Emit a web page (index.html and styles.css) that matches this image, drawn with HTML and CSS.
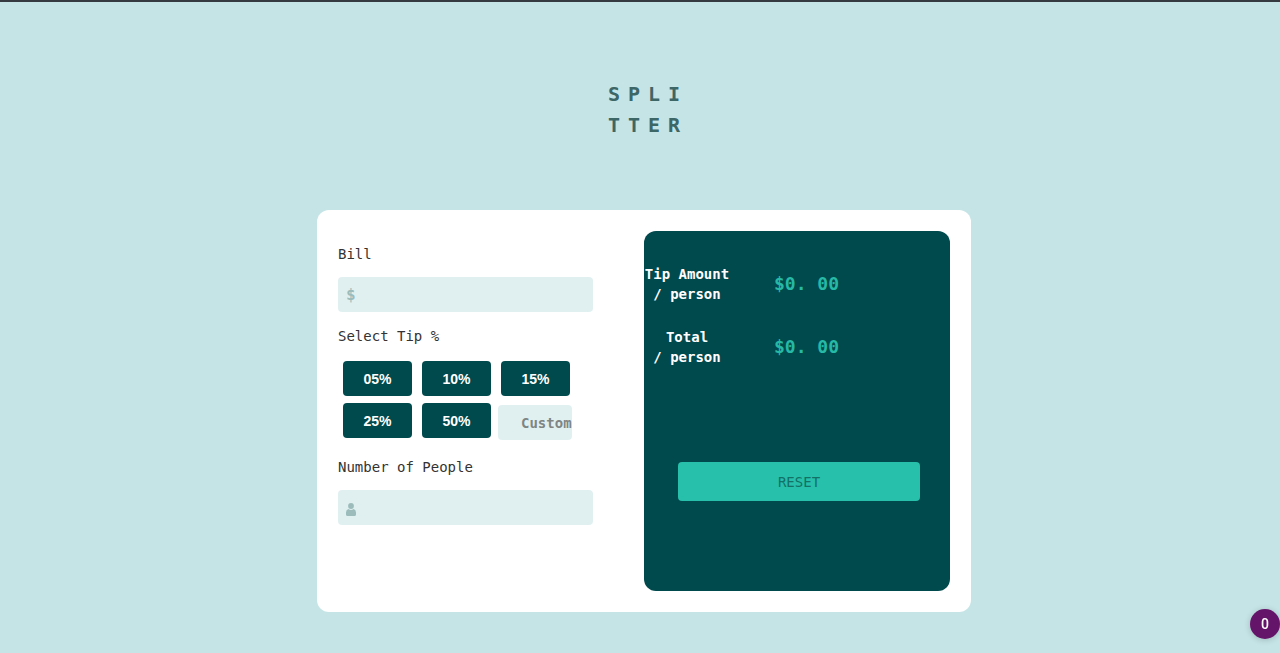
FILE: index.html
```html
<!DOCTYPE html>
<html lang="en">
<head>
  <meta charset="utf-8">
  <meta name="viewport" content="width=device-width, initial-scale=1">
  <title>Splitter</title>
  <link rel="stylesheet" href="styles.css">
</head>
<body>
  <main class="page">
    <h1 class="logo">SPLI<br>TTER</h1>
    <div class="card">
      <form class="form">
        <label class="label" for="bill">Bill</label>
        <div class="field">
          <span class="field-icon" aria-hidden="true">$</span>
          <input class="field-input" id="bill" type="text" inputmode="decimal">
        </div>
        <fieldset class="tips">
          <legend class="label">Select Tip %</legend>
          <div class="tip-grid">
            <button class="tip" type="button">05%</button>
            <button class="tip" type="button">10%</button>
            <button class="tip" type="button">15%</button>
            <button class="tip" type="button">25%</button>
            <button class="tip" type="button">50%</button>
            <input class="tip-custom" type="text" placeholder="Custom" aria-label="Custom tip">
          </div>
        </fieldset>
        <label class="label" for="people">Number of People</label>
        <div class="field">
          <svg class="field-icon person" viewBox="0 0 10 13" aria-hidden="true"><circle cx="5" cy="3" r="2.9"/><path d="M2.4 5.9Q5 8 7.6 5.9Q10 6.8 10 9.5V11.4Q10 13 8.4 13H1.6Q0 13 0 11.4V9.5Q0 6.8 2.4 5.9Z"/></svg>
          <input class="field-input" id="people" type="text" inputmode="numeric">
        </div>
      </form>
      <section class="panel">
        <div class="result">
          <h2 class="result-name">Tip Amount<br>/ person</h2>
          <output class="amount">$0. 00</output>
        </div>
        <div class="result">
          <h2 class="result-name">Total<br>/ person</h2>
          <output class="amount">$0. 00</output>
        </div>
        <button class="reset" type="button">RESET</button>
      </section>
    </div>
  </main>
  <button class="counter" type="button">0</button>
</body>
</html>
```
FILE: styles.css
```css
* {
  box-sizing: border-box;
}

body {
  margin: 0;
  min-height: 100vh;
  border-top: 2px solid #343a40;
  background: #c5e4e6;
  color: #333;
  font: 14px/20px "DejaVu Sans Mono", "Liberation Mono", monospace;
}

.page {
  padding: 77px 0 40px 8px;
}

.logo {
  margin: 0 0 69px;
  padding-left: 8px;
  color: #3d6666;
  font-size: 20px;
  line-height: 31px;
  letter-spacing: 8px;
  text-align: center;
}

.card {
  display: grid;
  grid-template-columns: 1fr 1fr;
  max-width: 654px;
  margin: 0 auto;
  padding: 21px;
  border-radius: 12px;
  background: #fff;
}

.form {
  padding-top: 13px;
}

.label {
  display: block;
  margin-bottom: 13px;
  padding: 0;
}

.field {
  display: flex;
  align-items: center;
  width: 255px;
  max-width: 100%;
  height: 35px;
  padding: 0 8px;
  border-radius: 4px;
  background: #e0f0f1;
}

.field-icon {
  flex: none;
  width: 10px;
  color: #9bbcbb;
  font-size: 16px;
  font-weight: bold;
}

.person {
  height: 13px;
  margin-top: 4px;
  fill: #9bbcbb;
}

.field-input {
  flex: 1;
  min-width: 0;
  height: 100%;
  padding: 0 8px;
  border: 0;
  outline: 0;
  background: transparent;
  color: #00494d;
  font: inherit;
}

.tips {
  min-width: 0;
  margin: 14px 0 17px;
  padding: 0;
  border: 0;
}

.tip-grid {
  display: grid;
  grid-template-columns: repeat(3, 69px);
  gap: 7px 10px;
  align-items: start;
  padding: 2px 0 0 5px;
}

.tip {
  height: 35px;
  padding: 0;
  border: 0;
  border-radius: 4px;
  background: #00494d;
  color: #fff;
  font: bold 14px/20px "Liberation Sans", Arial, sans-serif;
}

.tip-custom {
  width: 74px;
  height: 35px;
  margin: 2px 0 0 -3px;
  padding: 0 0 0 23px;
  border: 0;
  border-radius: 4px;
  background: #e0f0f1;
  font: bold 14px/20px "DejaVu Sans Mono", "Liberation Mono", monospace;
}

.tip-custom::placeholder {
  color: #7f8583;
  opacity: 1;
}

.panel {
  display: flex;
  flex-direction: column;
  gap: 23px;
  padding: 33px 0 90px;
  border-radius: 12px;
  background: #00494d;
}

.result {
  display: grid;
  grid-template-columns: 86px 1fr;
  column-gap: 44px;
  align-items: center;
}

.result-name {
  margin: 0;
  color: #fff;
  font-size: 14px;
  line-height: 20px;
  text-align: center;
}

.amount {
  color: #26b9a5;
  font-size: 18px;
  font-weight: bold;
}

.reset {
  height: 39px;
  margin: 72px 30px 0 34px;
  border: 0;
  border-radius: 4px;
  background: #26c0ab;
  color: #137166;
  font: inherit;
}

.counter {
  position: fixed;
  right: 0;
  bottom: 14px;
  width: 30px;
  height: 30px;
  padding: 0;
  border: 0;
  border-radius: 50%;
  background: #651569;
  box-shadow: 0 1px 6px rgb(0 0 0 / 20%);
  color: #fff;
  font: 500 14px/20px Roboto, "Liberation Sans", sans-serif;
}
```
